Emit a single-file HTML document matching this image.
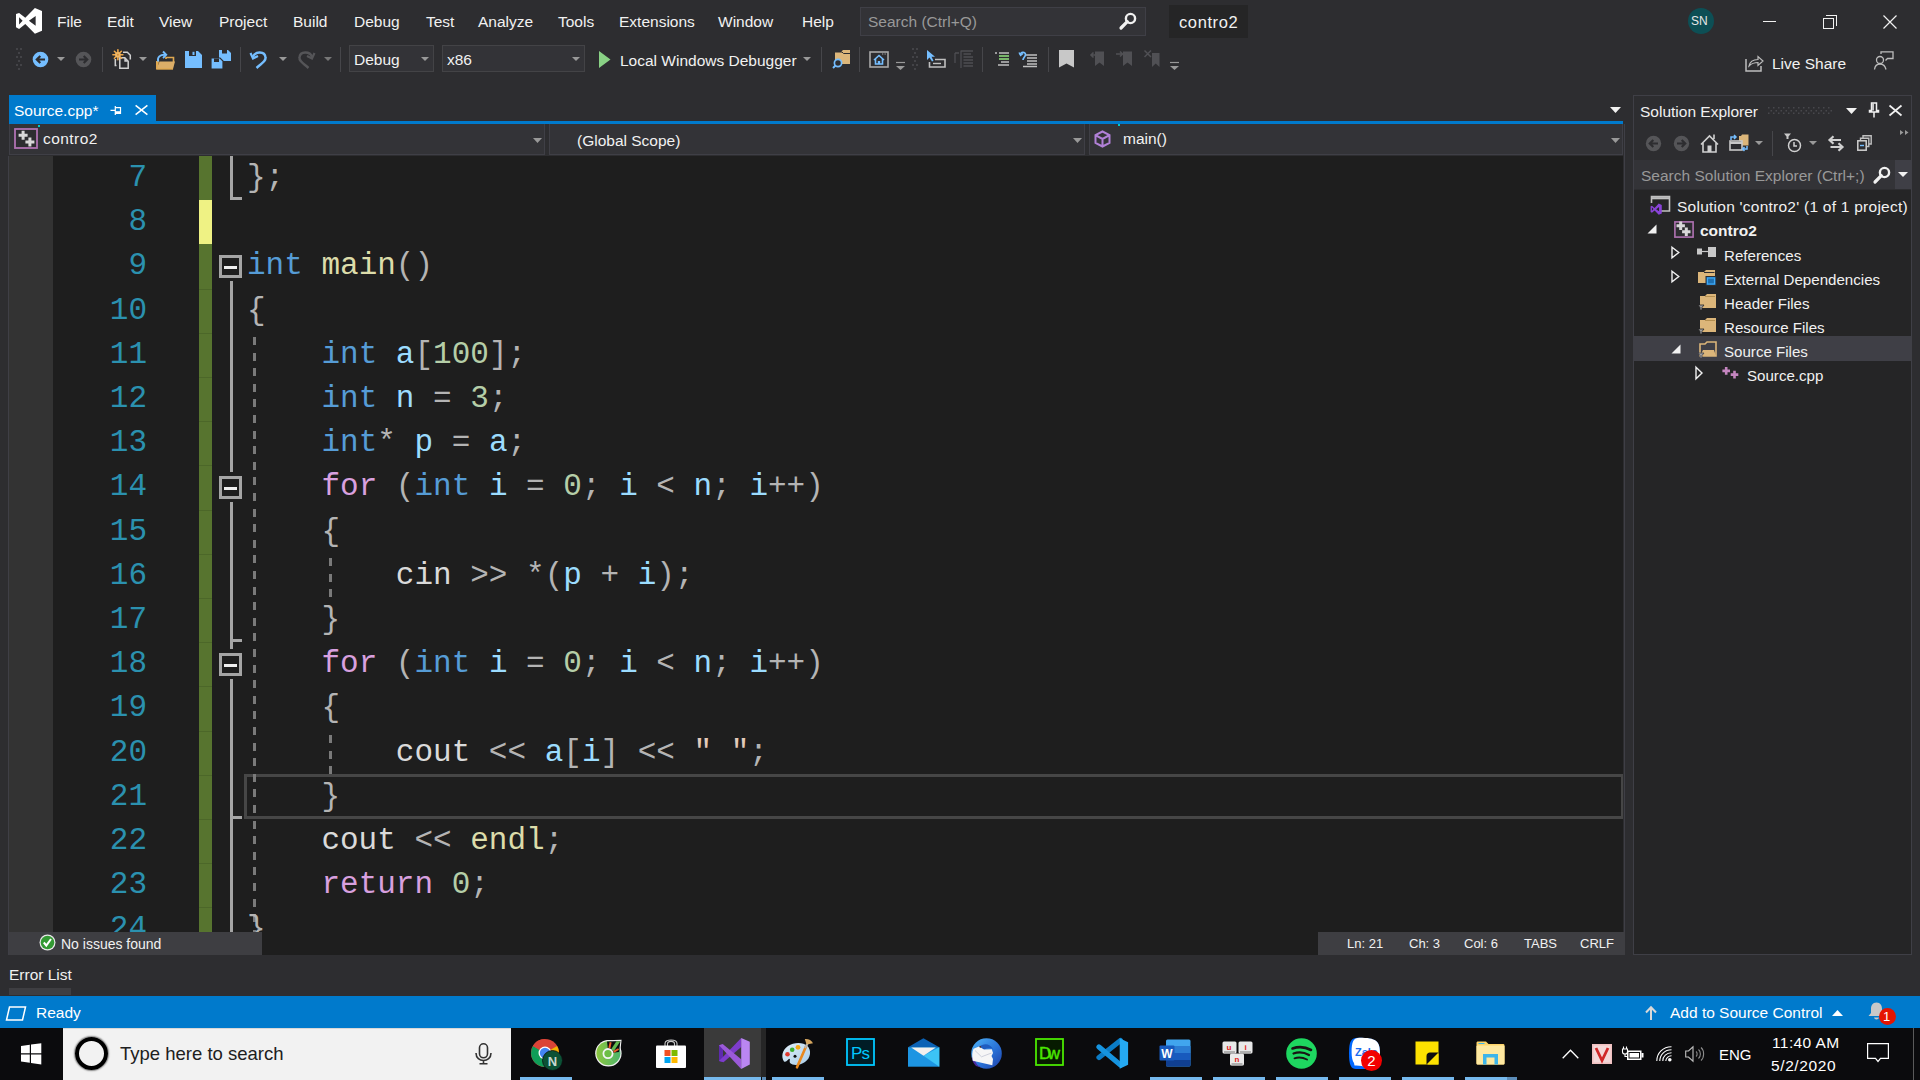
<!DOCTYPE html>
<html><head><meta charset="utf-8">
<style>
*{margin:0;padding:0;box-sizing:border-box}
html,body{width:1920px;height:1080px;overflow:hidden;background:#2D2D30}
body{position:relative;font-family:"Liberation Sans",sans-serif;color:#F1F1F1;font-size:15.5px}
.a{position:absolute}
.t{position:absolute;white-space:pre;line-height:1}
svg{position:absolute;overflow:visible}
#editor{position:absolute;left:9px;top:156px;width:1614px;height:776px;background:#1E1E1E;overflow:hidden}
#gm{position:absolute;left:0;top:0;width:44px;height:776px;background:#333333}
.ln{position:absolute;left:34px;width:104px;text-align:right;font-family:"Liberation Mono",monospace;font-size:31px;color:#2B91AF;height:44px;line-height:44px}
.cl{position:absolute;left:238px;font-family:"Liberation Mono",monospace;font-size:31px;height:44px;line-height:44px;white-space:pre;color:#DADADA}
.k{color:#569CD6}.f{color:#D8A0DF}.v{color:#9CDCFE}.n{color:#B5CEA8}.p{color:#B4B4B4}.fn{color:#DCDCAA}.s{color:#E2CABA}
.ob{position:absolute;left:210px;width:23px;height:23px;border:3px solid #A5A5A5;background:#1E1E1E}
.ob::after{content:"";position:absolute;left:2px;top:8px;width:13px;height:3px;background:#F0F0F0}
.ov{position:absolute;left:221px;width:3px;background:#A5A5A5}
.oh{position:absolute;left:221px;width:12px;height:3px;background:#A5A5A5}
.guide{position:absolute;width:3px;background:repeating-linear-gradient(to bottom,#7A7A7A 0 8px,transparent 8px 15.6px)}
.mi{position:absolute;top:14px;white-space:pre;line-height:1;font-size:15.5px;color:#F1F1F1}
</style></head>
<body>
<!-- ================= EDITOR ================= -->
<div id="editor">
  <div id="gm"></div>
  <div class="a" style="left:190px;top:0;width:13px;height:776px;background:#57742F"></div>
  <div class="a" style="left:190px;top:44.2px;width:13px;height:44.2px;background:#EFF284"></div>
  <div class="a" style="left:190px;top:132.6px;width:13px;height:1px;background:#4C6729"></div>
  <div class="a" style="left:190px;top:176.8px;width:13px;height:1px;background:#4C6729"></div>
  <div class="a" style="left:190px;top:221px;width:13px;height:1px;background:#4C6729"></div>
  <div class="a" style="left:190px;top:265.2px;width:13px;height:1px;background:#4C6729"></div>
  <div class="a" style="left:190px;top:309.4px;width:13px;height:1px;background:#4C6729"></div>
  <div class="a" style="left:190px;top:353.6px;width:13px;height:1px;background:#4C6729"></div>
  <div class="a" style="left:190px;top:397.8px;width:13px;height:1px;background:#4C6729"></div>
  <div class="a" style="left:190px;top:442px;width:13px;height:1px;background:#4C6729"></div>
  <div class="a" style="left:190px;top:486.2px;width:13px;height:1px;background:#4C6729"></div>
  <div class="a" style="left:190px;top:530.4px;width:13px;height:1px;background:#4C6729"></div>
  <div class="a" style="left:190px;top:574.6px;width:13px;height:1px;background:#4C6729"></div>
  <div class="a" style="left:190px;top:618.8px;width:13px;height:1px;background:#4C6729"></div>
  <div class="a" style="left:190px;top:663px;width:13px;height:1px;background:#4C6729"></div>
  <div class="a" style="left:190px;top:707.2px;width:13px;height:1px;background:#4C6729"></div>
  <div class="a" style="left:190px;top:751.4px;width:13px;height:1px;background:#4C6729"></div>
  <!-- current line box -->
  <div class="a" style="left:235px;top:618px;width:1380px;height:45px;border:3px solid #464646"></div>
  <!-- outlining -->
  <div class="ov" style="top:0;height:44px"></div><div class="oh" style="top:41px"></div>
  <div class="ob" style="top:99px"></div>
  <div class="ov" style="top:125px;height:191px"></div>
  <div class="ob" style="top:320px"></div>
  <div class="ov" style="top:346px;height:147px"></div><div class="oh" style="top:483px"></div>
  <div class="ob" style="top:497px"></div>
  <div class="ov" style="top:523px;height:253px"></div><div class="oh" style="top:660px"></div>
  <!-- indent guides -->
  <div class="guide" style="left:244px;top:181px;height:600px"></div>
  <div class="guide" style="left:320px;top:402px;height:44px"></div>
  <div class="guide" style="left:320px;top:579px;height:44px"></div>
<div class="ln" style="top:0.0px">7</div>
<div class="cl" style="top:0.0px"><span class="p">};</span></div>
<div class="ln" style="top:44.2px">8</div>
<div class="cl" style="top:44.2px"></div>
<div class="ln" style="top:88.4px">9</div>
<div class="cl" style="top:88.4px"><span class="k">int</span> <span class="fn">main</span><span class="p">()</span></div>
<div class="ln" style="top:132.6px">10</div>
<div class="cl" style="top:132.6px"><span class="p">{</span></div>
<div class="ln" style="top:176.8px">11</div>
<div class="cl" style="top:176.8px">    <span class="k">int</span> <span class="v">a</span><span class="p">[</span><span class="n">100</span><span class="p">];</span></div>
<div class="ln" style="top:221.0px">12</div>
<div class="cl" style="top:221.0px">    <span class="k">int</span> <span class="v">n</span> <span class="p">=</span> <span class="n">3</span><span class="p">;</span></div>
<div class="ln" style="top:265.2px">13</div>
<div class="cl" style="top:265.2px">    <span class="k">int</span><span class="p">*</span> <span class="v">p</span> <span class="p">=</span> <span class="v">a</span><span class="p">;</span></div>
<div class="ln" style="top:309.4px">14</div>
<div class="cl" style="top:309.4px">    <span class="f">for</span> <span class="p">(</span><span class="k">int</span> <span class="v">i</span> <span class="p">=</span> <span class="n">0</span><span class="p">;</span> <span class="v">i</span> <span class="p">&lt;</span> <span class="v">n</span><span class="p">;</span> <span class="v">i</span><span class="p">++)</span></div>
<div class="ln" style="top:353.6px">15</div>
<div class="cl" style="top:353.6px">    <span class="p">{</span></div>
<div class="ln" style="top:397.8px">16</div>
<div class="cl" style="top:397.8px">        cin <span class="p">&gt;&gt;</span> <span class="p">*(</span><span class="v">p</span> <span class="p">+</span> <span class="v">i</span><span class="p">);</span></div>
<div class="ln" style="top:442.0px">17</div>
<div class="cl" style="top:442.0px">    <span class="p">}</span></div>
<div class="ln" style="top:486.2px">18</div>
<div class="cl" style="top:486.2px">    <span class="f">for</span> <span class="p">(</span><span class="k">int</span> <span class="v">i</span> <span class="p">=</span> <span class="n">0</span><span class="p">;</span> <span class="v">i</span> <span class="p">&lt;</span> <span class="v">n</span><span class="p">;</span> <span class="v">i</span><span class="p">++)</span></div>
<div class="ln" style="top:530.4px">19</div>
<div class="cl" style="top:530.4px">    <span class="p">{</span></div>
<div class="ln" style="top:574.6px">20</div>
<div class="cl" style="top:574.6px">        cout <span class="p">&lt;&lt;</span> <span class="v">a</span><span class="p">[</span><span class="v">i</span><span class="p">]</span> <span class="p">&lt;&lt;</span> <span class="s">&quot; &quot;</span><span class="p">;</span></div>
<div class="ln" style="top:618.8px">21</div>
<div class="cl" style="top:618.8px">    <span class="p">}</span></div>
<div class="ln" style="top:663.0px">22</div>
<div class="cl" style="top:663.0px">    cout <span class="p">&lt;&lt;</span> <span class="fn">endl</span><span class="p">;</span></div>
<div class="ln" style="top:707.2px">23</div>
<div class="cl" style="top:707.2px">    <span class="f">return</span> <span class="n">0</span><span class="p">;</span></div>
<div class="ln" style="top:751.4px">24</div>
<div class="cl" style="top:751.4px"><span class="p">}</span></div>
</div>
<!-- ================= MENU BAR ================= -->
<svg style="left:0;top:0" width="50" height="40" viewBox="0 0 50 40"><path fill="#FFFFFF" fill-rule="evenodd" d="M34.9 7.9 L42 11.1 V30.75 L34.9 33.7 L25.3 24 L19.1 28.9 L16 27.3 V14.1 L19.1 13 L25.3 17.85 Z M19.1 17.2 L22.6 20.7 L19.1 24.5 Z M28.9 20.8 L35.65 16 V25.7 Z"/></svg>
<div class="mi" style="left:57px">File</div>
<div class="mi" style="left:107px">Edit</div>
<div class="mi" style="left:159px">View</div>
<div class="mi" style="left:219px">Project</div>
<div class="mi" style="left:293px">Build</div>
<div class="mi" style="left:354px">Debug</div>
<div class="mi" style="left:426px">Test</div>
<div class="mi" style="left:478px">Analyze</div>
<div class="mi" style="left:558px">Tools</div>
<div class="mi" style="left:619px">Extensions</div>
<div class="mi" style="left:718px">Window</div>
<div class="mi" style="left:802px">Help</div>
<!-- search -->
<div class="a" style="left:860px;top:7px;width:286px;height:29px;background:#333337;border:1px solid #3F3F46"></div>
<div class="t" style="left:868px;top:14px;color:#999999">Search (Ctrl+Q)</div>
<svg style="left:1119px;top:12px" width="18" height="18" viewBox="0 0 18 18"><circle cx="11.5" cy="6.5" r="4.6" fill="none" stroke="#F1F1F1" stroke-width="2.4"/><path d="M8.3 9.7 L2 16" stroke="#F1F1F1" stroke-width="3.2" stroke-linecap="round"/></svg>
<div class="a" style="left:1169px;top:5px;width:79px;height:33px;background:#252526"></div>
<div class="t" style="left:1179px;top:14px;color:#F1F1F1;font-size:16.5px;letter-spacing:0.6px">contro2</div>
<!-- avatar -->
<div class="a" style="left:1688px;top:8px;width:26px;height:26px;border-radius:50%;background:#0D4F55"></div>
<div class="t" style="left:1691px;top:15px;font-size:12px;color:#E8E8E8">SN</div>
<!-- window buttons -->
<div class="a" style="left:1763px;top:21px;width:13px;height:1px;background:#F1F1F1"></div>
<div class="a" style="left:1823px;top:18px;width:11px;height:11px;border:1px solid #F1F1F1"></div>
<div class="a" style="left:1826px;top:15px;width:11px;height:11px;border-top:1px solid #F1F1F1;border-right:1px solid #F1F1F1"></div>
<svg style="left:1883px;top:15px" width="14" height="14" viewBox="0 0 14 14"><path d="M0.5 0.5 L13.5 13.5 M13.5 0.5 L0.5 13.5" stroke="#F1F1F1" stroke-width="1.2"/></svg>
<!-- ================= TOOLBAR ================= -->
<svg style="left:15px;top:48px" width="8" height="23" viewBox="0 0 8 23"><g fill="#434347"><rect x="1" y="0" width="2" height="2"/><rect x="5" y="0" width="2" height="2"/><rect x="3" y="4" width="2" height="2"/><rect x="1" y="8" width="2" height="2"/><rect x="5" y="8" width="2" height="2"/><rect x="3" y="12" width="2" height="2"/><rect x="1" y="16" width="2" height="2"/><rect x="5" y="16" width="2" height="2"/><rect x="3" y="20" width="2" height="2"/></g></svg>
<!-- back / fwd -->
<svg style="left:32px;top:51px" width="17" height="17" viewBox="0 0 17 17"><circle cx="8.5" cy="8.5" r="7.8" fill="#75BEFF"/><path d="M13 8.5 H5 M8.3 5 L4.8 8.5 L8.3 12" fill="none" stroke="#2D2D30" stroke-width="2.2"/></svg>
<svg style="left:57px;top:57px" width="8" height="4" viewBox="0 0 8 4"><path d="M0 0H8L4 4Z" fill="#999999"/></svg>
<svg style="left:75px;top:51px" width="17" height="17" viewBox="0 0 17 17"><circle cx="8.5" cy="8.5" r="7.8" fill="#555558"/><path d="M4 8.5 H12 M8.7 5 L12.2 8.5 L8.7 12" fill="none" stroke="#2D2D30" stroke-width="2.2"/></svg>
<div class="a" style="left:102px;top:47px;width:1px;height:25px;background:#46464A"></div>
<!-- new project -->
<svg style="left:113px;top:49px" width="20" height="21" viewBox="0 0 20 21"><path d="M10 3.3 H14.3 L17.3 6.3 V10.5" fill="none" stroke="#D0D0D0" stroke-width="1.5"/><path d="M3.2 10.8 H2.3 V16.5 H3.5" fill="none" stroke="#D0D0D0" stroke-width="1.5"/><path d="M6.8 8.8 H11.8 L15.2 12.2 V19.3 H6.8 Z" fill="#2D2D30" stroke="#D0D0D0" stroke-width="1.5"/><path d="M11.3 8.8 V12.7 H15.2" fill="#D0D0D0"/><g stroke="#F0A848" stroke-width="1.6" stroke-linecap="round"><path d="M4.9 0.8 V10.8 M-0.1 5.8 H9.9 M1.4 2.3 L8.4 9.3 M8.4 2.3 L1.4 9.3"/></g><circle cx="4.9" cy="5.8" r="2.8" fill="#F0B868"/><circle cx="4.9" cy="5.8" r="1" fill="#D89038"/></svg>
<svg style="left:139px;top:57px" width="8" height="4" viewBox="0 0 8 4"><path d="M0 0H8L4 4Z" fill="#999999"/></svg>
<!-- open folder -->
<svg style="left:155px;top:50px" width="21" height="20" viewBox="0 0 21 20"><path d="M11 9 V7.5 H18.5 V12" fill="none" stroke="#E0A850" stroke-width="1.6"/><path d="M1 11 H4 L2.5 19 H1 Z" fill="#E0A850"/><path d="M4.5 11.5 H20 L18 19 H1.5 Z" fill="#DCAE68"/><path d="M1.2 19 H18" stroke="#E0A850" stroke-width="1.4"/><path d="M3.2 11.5 C2 7 5 4.5 10.5 4.8" fill="none" stroke="#75BEFF" stroke-width="1.9"/><path d="M8 1.5 L11.2 4.8 L8 8" fill="none" stroke="#75BEFF" stroke-width="1.9"/></svg>
<!-- save -->
<svg style="left:185px;top:51px" width="17" height="17" viewBox="0 0 17 17"><path d="M0 0 H13 L17 4 V17 H0 Z" fill="#75BEFF"/><rect x="4" y="0" width="7" height="5" fill="#2D2D30"/><rect x="7.5" y="0.8" width="2" height="3.2" fill="#75BEFF"/></svg>
<!-- save all -->
<svg style="left:211px;top:50px" width="21" height="20" viewBox="0 0 21 20"><path d="M8 0 H17 L20 3 V11 H8 Z" fill="#75BEFF"/><rect x="11" y="0" width="5" height="3.5" fill="#2D2D30"/><path d="M0 8 H9 L12 11 H12 V19 H0 Z" fill="#75BEFF" stroke="#2D2D30" stroke-width="1.2"/><rect x="3" y="8.5" width="5" height="3.5" fill="#2D2D30"/></svg>
<div class="a" style="left:240px;top:47px;width:1px;height:25px;background:#46464A"></div>
<!-- undo / redo -->
<svg style="left:250px;top:50px" width="19" height="19" viewBox="0 0 19 19"><path d="M3 7 C5 1 15 1 15.5 7.5 C16 11 12 13 6.5 18" fill="none" stroke="#75BEFF" stroke-width="2.4"/><path d="M0.5 3 L3 8.5 L8 6" fill="none" stroke="#75BEFF" stroke-width="2.2"/></svg>
<svg style="left:279px;top:57px" width="8" height="4" viewBox="0 0 8 4"><path d="M0 0H8L4 4Z" fill="#999999"/></svg>
<svg style="left:296px;top:50px" width="19" height="19" viewBox="0 0 19 19"><path d="M16 7 C14 1 4 1 3.5 7.5 C3 11 7 13 12.5 18" fill="none" stroke="#555558" stroke-width="2.4"/><path d="M18.5 3 L16 8.5 L11 6" fill="none" stroke="#555558" stroke-width="2.2"/></svg>
<svg style="left:324px;top:57px" width="8" height="4" viewBox="0 0 8 4"><path d="M0 0H8L4 4Z" fill="#777777"/></svg>
<div class="a" style="left:340px;top:47px;width:1px;height:25px;background:#46464A"></div>
<!-- Debug / x86 combos -->
<div class="a" style="left:349px;top:45px;width:85px;height:27px;background:#333337;border:1px solid #434346"></div>
<div class="t" style="left:354px;top:52px">Debug</div>
<svg style="left:421px;top:57px" width="8" height="4" viewBox="0 0 8 4"><path d="M0 0H8L4 4Z" fill="#999999"/></svg>
<div class="a" style="left:442px;top:45px;width:143px;height:27px;background:#333337;border:1px solid #434346"></div>
<div class="t" style="left:447px;top:52px">x86</div>
<svg style="left:572px;top:57px" width="8" height="4" viewBox="0 0 8 4"><path d="M0 0H8L4 4Z" fill="#999999"/></svg>
<!-- play -->
<svg style="left:599px;top:51px" width="12" height="17" viewBox="0 0 12 17"><path d="M0 0 L11.5 8.5 L0 17 Z" fill="#89D185"/></svg>
<div class="t" style="left:620px;top:53px">Local Windows Debugger</div>
<svg style="left:803px;top:57px" width="8" height="4" viewBox="0 0 8 4"><path d="M0 0H8L4 4Z" fill="#999999"/></svg>
<div class="a" style="left:821px;top:47px;width:1px;height:25px;background:#46464A"></div>
<!-- find in files folder -->
<svg style="left:832px;top:49px" width="20" height="20" viewBox="0 0 20 20"><path d="M3 3 H9 L11 1 H18 V15 H3 Z" fill="#DCB67A"/><path d="M3 3 H10 L11.5 4.5 H18" fill="none" stroke="#2D2D30" stroke-width="1"/><circle cx="6" cy="14" r="3.6" fill="#2D2D30" stroke="#75BEFF" stroke-width="1.7"/><path d="M3.5 16.5 L1 19" stroke="#75BEFF" stroke-width="2"/></svg>
<div class="a" style="left:859px;top:47px;width:1px;height:25px;background:#46464A"></div>
<!-- house frame -->
<svg style="left:869px;top:51px" width="20" height="17" viewBox="0 0 20 17"><rect x="1" y="1" width="18" height="15" fill="none" stroke="#A8A8A8" stroke-width="1.6"/><path d="M5 9 L10 4.5 L15 9 M6.5 8 V13 H13.5 V8" fill="none" stroke="#75BEFF" stroke-width="1.6"/><rect x="8.8" y="10" width="2.4" height="3" fill="#75BEFF"/><path d="M13 3h1.3M15.5 3h1.3" stroke="#A8A8A8" stroke-width="1"/></svg>
<svg style="left:896px;top:61px" width="9" height="9" viewBox="0 0 9 9"><path d="M0 1.5H9" stroke="#999" stroke-width="1.2"/><path d="M0 5H9L4.5 9Z" fill="#999"/></svg>
<svg style="left:912px;top:48px" width="6" height="23" viewBox="0 0 6 23"><g fill="#434347"><rect x="0" y="0" width="2" height="2"/><rect x="4" y="0" width="2" height="2"/><rect x="2" y="4" width="2" height="2"/><rect x="0" y="8" width="2" height="2"/><rect x="4" y="8" width="2" height="2"/><rect x="2" y="12" width="2" height="2"/><rect x="0" y="16" width="2" height="2"/><rect x="4" y="16" width="2" height="2"/><rect x="2" y="20" width="2" height="2"/></g></svg>
<!-- cursor list -->
<svg style="left:927px;top:50px" width="19" height="18" viewBox="0 0 19 18"><path d="M0 0 V10 L2.5 7.5 L5 11.5 L6.5 10.7 L4.5 6.8 H8 Z" fill="#75BEFF"/><path d="M2.5 12 V17 H18 V9.5 H8" fill="none" stroke="#C0C0C0" stroke-width="1.6"/><path d="M6 13.5 H14" stroke="#C0C0C0" stroke-width="1.4"/></svg>
<svg style="left:954px;top:50px" width="19" height="18" viewBox="0 0 19 18"><path d="M1 3 V13 M1 3 H5 M7 0.5 V18 M7 1 H19 M9.5 4 H17 M9.5 7 H19 M9.5 10 H19 M9.5 13 H19 M9.5 16 H19" fill="none" stroke="#4E4E52" stroke-width="1.3"/></svg>
<div class="a" style="left:982px;top:47px;width:1px;height:25px;background:#46464A"></div>
<svg style="left:995px;top:52px" width="14" height="14" viewBox="0 0 14 14"><path d="M0 1h2M4 1H14M4 4H14M4 7H14M6 10H14M3 13H14" stroke="#C0C0C0" stroke-width="1.3"/><path d="M4 4H14M4 7H14" stroke="#6DBF5A" stroke-width="1.6"/></svg>
<svg style="left:1019px;top:51px" width="18" height="16" viewBox="0 0 18 16"><path d="M6 4 H18M8 7 H18M8 10 H18M8 13 H18M4 15.5 H18" stroke="#C0C0C0" stroke-width="1.3"/><path d="M1.5 4 C1.5 0.5 6.5 0.5 6.5 3.5 C6.5 6 4 6.5 4 9" fill="none" stroke="#75BEFF" stroke-width="1.7"/><path d="M0 1.5 L1.6 4.5 L4 2.5" fill="none" stroke="#75BEFF" stroke-width="1.4"/></svg>
<div class="a" style="left:1048px;top:47px;width:1px;height:25px;background:#46464A"></div>
<!-- bookmarks -->
<svg style="left:1059px;top:50px" width="15" height="18" viewBox="0 0 15 18"><path d="M0 0 H15 V17.5 L7.5 13.5 L0 17.5 Z" fill="#C8C8C8"/></svg>
<svg style="left:1089px;top:50px" width="16" height="17" viewBox="0 0 16 17"><path d="M6 1.5 H15 V16 L10.5 12.5 L6 16 Z" fill="#505054"/><path d="M7 5 H2 M4.5 2.5 L2 5 L4.5 7.5" fill="none" stroke="#505054" stroke-width="1.6"/></svg>
<svg style="left:1116px;top:50px" width="16" height="17" viewBox="0 0 16 17"><path d="M7 1.5 H16 V16 L11.5 12.5 L7 16 Z" fill="#505054"/><path d="M0 4 H6 M4 1.5 L6.5 4 L4 6.5" fill="none" stroke="#505054" stroke-width="1.6"/></svg>
<svg style="left:1144px;top:50px" width="16" height="18" viewBox="0 0 16 18"><path d="M8 3 H15.5 V17 L11.7 13.5 L8 17 Z" fill="#505054"/><path d="M0.5 0.5 L7 7 M7 0.5 L0.5 7" stroke="#505054" stroke-width="1.5"/></svg>
<svg style="left:1170px;top:61px" width="9" height="9" viewBox="0 0 9 9"><path d="M0 1.5H9" stroke="#999" stroke-width="1.2"/><path d="M0 5H9L4.5 9Z" fill="#999"/></svg>
<!-- live share -->
<svg style="left:1745px;top:54px" width="19" height="18" viewBox="0 0 19 18"><path d="M1 5 V17 H16 V12" fill="none" stroke="#BDBDBD" stroke-width="1.5"/><path d="M4 12 C5 7 9 5.5 13 5.5 V2.5 L18 7 L13 11.5 V8.5 C9.5 8.5 6.5 9.5 4 12 Z" fill="none" stroke="#BDBDBD" stroke-width="1.2"/></svg>
<div class="t" style="left:1772px;top:56px">Live Share</div>
<svg style="left:1874px;top:51px" width="20" height="19" viewBox="0 0 20 19"><path d="M7 3 V0.8 H19 V7.5 H13.5 L11.5 9.5" fill="none" stroke="#BDBDBD" stroke-width="1.3"/><circle cx="6" cy="9" r="3.5" fill="none" stroke="#BDBDBD" stroke-width="1.3"/><path d="M0.5 18.5 C1 14 3 13 6 13 C9 13 11 14 12 18.5" fill="none" stroke="#BDBDBD" stroke-width="1.3"/></svg>
<!-- ================= TAB STRIP ================= -->
<div class="a" style="left:9px;top:95px;width:147px;height:29px;background:#007ACC"></div>
<div class="a" style="left:9px;top:121px;width:1614px;height:3px;background:#007ACC"></div>
<div class="t" style="left:14px;top:103px;color:#FFFFFF">Source.cpp*</div>
<svg style="left:110px;top:105px" width="12" height="11" viewBox="0 0 12 11"><path d="M0.5 5.3 H5.3 M5.3 1 V10 M5.3 2.6 H10.5 V8.3 H5.3" fill="none" stroke="#FFFFFF" stroke-width="1.2"/><path d="M5.3 7.2 H10.5" stroke="#FFFFFF" stroke-width="2"/></svg>
<svg style="left:135px;top:105px" width="13" height="10" viewBox="0 0 13 10"><path d="M0.6 0.3 L12.4 9.7 M12.4 0.3 L0.6 9.7" stroke="#FFFFFF" stroke-width="1.5"/></svg>
<svg style="left:1610px;top:107px" width="11" height="6" viewBox="0 0 11 6"><path d="M0 0 H11 L5.5 6 Z" fill="#F1F1F1"/></svg>
<!-- ================= NAV BAR ================= -->
<div class="a" style="left:9px;top:124px;width:536px;height:31px;background:#333337;border:1px solid #3F3F46;border-top:0"></div>
<div class="a" style="left:549px;top:124px;width:536px;height:31px;background:#333337;border:1px solid #3F3F46;border-top:0"></div>
<div class="a" style="left:1089px;top:124px;width:534px;height:31px;background:#333337;border:1px solid #3F3F46;border-top:0"></div>
<svg style="left:14px;top:128px" width="25" height="21" viewBox="0 0 25 21"><rect x="1" y="1" width="22" height="19" fill="#2D2D30" stroke="#B072B2" stroke-width="1.8"/><path d="M4.6 7.2 H13.6 M9.1 2.7 V11.7 M11.4 14 H20.4 M15.9 9.5 V18.5" stroke="#D8D8D8" stroke-width="3"/></svg>
<div class="t" style="left:43px;top:131px;letter-spacing:0.45px">contro2</div>
<div class="t" style="left:577px;top:133px">(Global Scope)</div>
<svg style="left:1094px;top:130px" width="17" height="18" viewBox="0 0 17 18"><path d="M8.5 1.5 L15.5 5.2 V12.8 L8.5 16.5 L1.5 12.8 V5.2 Z M1.5 5.2 L8.5 9 L15.5 5.2 M8.5 9 V16.5" fill="none" stroke="#B180D7" stroke-width="2"/></svg>
<div class="t" style="left:1123px;top:131px">main()</div>
<svg style="left:533px;top:138px" width="9" height="5" viewBox="0 0 9 5"><path d="M0 0 H9 L4.5 5 Z" fill="#999999"/></svg>
<svg style="left:1073px;top:138px" width="9" height="5" viewBox="0 0 9 5"><path d="M0 0 H9 L4.5 5 Z" fill="#999999"/></svg>
<svg style="left:1611px;top:138px" width="9" height="5" viewBox="0 0 9 5"><path d="M0 0 H9 L4.5 5 Z" fill="#999999"/></svg>
<div class="a" style="left:38px;top:125px;width:2px;height:2px;background:#00C8D0"></div>
<div class="a" style="left:1118px;top:124px;width:2px;height:2px;background:#00C8D0"></div>
<!-- ================= EDITOR BOTTOM STRIP ================= -->
<div class="a" style="left:9px;top:932px;width:1614px;height:23px;background:#1E1E1E"></div>
<div class="a" style="left:9px;top:932px;width:253px;height:23px;background:#3E3E42"></div>
<svg style="left:39px;top:934px" width="17" height="17" viewBox="0 0 17 17"><circle cx="8.5" cy="8.5" r="8" fill="#E8E8E8"/><circle cx="8.5" cy="8.5" r="6.8" fill="#339933"/><path d="M4.8 8.5 L7.3 11.5 L12 5" fill="none" stroke="#FFFFFF" stroke-width="2"/></svg>
<div class="t" style="left:61px;top:937px;font-size:14px">No issues found</div>
<div class="a" style="left:1318px;top:932px;width:307px;height:23px;background:#3E3E42"></div>
<div class="a" style="left:1624px;top:124px;width:1px;height:808px;background:#3F3F46"></div>
<div class="a" style="left:8px;top:156px;width:1px;height:799px;background:#3F3F46"></div>
<div class="t" style="left:1347px;top:937px;font-size:13px">Ln: 21</div>
<div class="t" style="left:1409px;top:937px;font-size:13px">Ch: 3</div>
<div class="t" style="left:1464px;top:937px;font-size:13px">Col: 6</div>
<div class="t" style="left:1524px;top:937px;font-size:13px">TABS</div>
<div class="t" style="left:1580px;top:937px;font-size:13px">CRLF</div>
<div class="t" style="left:9px;top:967px">Error List</div>
<div class="a" style="left:9px;top:988px;width:62px;height:7px;background:#3E3E42"></div>
<!-- ================= STATUS BAR ================= -->
<div class="a" style="left:0;top:996px;width:1920px;height:32px;background:#007ACC"></div>
<svg style="left:5px;top:1006px" width="22" height="15" viewBox="0 0 22 15"><path d="M4.5 1 H20.5 L17.5 14 H1.5 Z" fill="none" stroke="#FFFFFF" stroke-width="1.5"/></svg>
<div class="t" style="left:36px;top:1005px;color:#FFFFFF">Ready</div>
<svg style="left:1645px;top:1006px" width="12" height="14" viewBox="0 0 12 14"><path d="M6 14 V2 M1 6.5 L6 1.2 L11 6.5" fill="none" stroke="#D8D8D8" stroke-width="2"/></svg>
<div class="t" style="left:1670px;top:1005px;color:#FFFFFF">Add to Source Control</div>
<svg style="left:1832px;top:1010px" width="11" height="6" viewBox="0 0 11 6"><path d="M0 6 H11 L5.5 0 Z" fill="#FFFFFF"/></svg>
<svg style="left:1868px;top:1002px" width="17" height="19" viewBox="0 0 17 19"><path d="M8.5 0.5 C12.5 0.5 14 3.5 14 7 V11 L16.5 14 H0.5 L3 11 V7 C3 3.5 4.5 0.5 8.5 0.5 Z M6 15.5 C6.5 18 10.5 18 11 15.5" fill="#C8C8C8"/></svg>
<div class="a" style="left:1879px;top:1008px;width:17px;height:17px;border-radius:50%;background:#E51400"></div>
<div class="t" style="left:1883px;top:1010px;font-size:13px;color:#FFFFFF">1</div>
<!-- ================= SOLUTION EXPLORER ================= -->
<div class="a" style="left:1633px;top:95px;width:279px;height:860px;border:1px solid #3F3F46;background:#252526"></div>
<div class="a" style="left:1634px;top:96px;width:277px;height:94px;background:#2D2D30"></div>
<div class="t" style="left:1640px;top:104px">Solution Explorer</div>
<svg style="left:1768px;top:107px" width="68" height="7" viewBox="0 0 68 7"><g fill="#48484C">
<rect x="0" y="0" width="1.5" height="1.5"/><rect x="5" y="0" width="1.5" height="1.5"/><rect x="10" y="0" width="1.5" height="1.5"/><rect x="15" y="0" width="1.5" height="1.5"/><rect x="20" y="0" width="1.5" height="1.5"/><rect x="25" y="0" width="1.5" height="1.5"/><rect x="30" y="0" width="1.5" height="1.5"/><rect x="35" y="0" width="1.5" height="1.5"/><rect x="40" y="0" width="1.5" height="1.5"/><rect x="45" y="0" width="1.5" height="1.5"/><rect x="50" y="0" width="1.5" height="1.5"/><rect x="55" y="0" width="1.5" height="1.5"/><rect x="60" y="0" width="1.5" height="1.5"/>
<rect x="2.5" y="3" width="1.5" height="1.5"/><rect x="7.5" y="3" width="1.5" height="1.5"/><rect x="12.5" y="3" width="1.5" height="1.5"/><rect x="17.5" y="3" width="1.5" height="1.5"/><rect x="22.5" y="3" width="1.5" height="1.5"/><rect x="27.5" y="3" width="1.5" height="1.5"/><rect x="32.5" y="3" width="1.5" height="1.5"/><rect x="37.5" y="3" width="1.5" height="1.5"/><rect x="42.5" y="3" width="1.5" height="1.5"/><rect x="47.5" y="3" width="1.5" height="1.5"/><rect x="52.5" y="3" width="1.5" height="1.5"/><rect x="57.5" y="3" width="1.5" height="1.5"/><rect x="62.5" y="3" width="1.5" height="1.5"/>
<rect x="0" y="5.5" width="1.5" height="1.5"/><rect x="5" y="5.5" width="1.5" height="1.5"/><rect x="10" y="5.5" width="1.5" height="1.5"/><rect x="15" y="5.5" width="1.5" height="1.5"/><rect x="20" y="5.5" width="1.5" height="1.5"/><rect x="25" y="5.5" width="1.5" height="1.5"/><rect x="30" y="5.5" width="1.5" height="1.5"/><rect x="35" y="5.5" width="1.5" height="1.5"/><rect x="40" y="5.5" width="1.5" height="1.5"/><rect x="45" y="5.5" width="1.5" height="1.5"/><rect x="50" y="5.5" width="1.5" height="1.5"/><rect x="55" y="5.5" width="1.5" height="1.5"/><rect x="60" y="5.5" width="1.5" height="1.5"/>
</g></svg>
<svg style="left:1846px;top:108px" width="11" height="6" viewBox="0 0 11 6"><path d="M0 0 H11 L5.5 6 Z" fill="#F1F1F1"/></svg>
<svg style="left:1869px;top:102px" width="10" height="16" viewBox="0 0 10 16"><path d="M2.5 1 H7.5 V8.5 H9.5 V10 H0.5 V8.5 H2.5 Z M5 10 V15.5" fill="none" stroke="#F1F1F1" stroke-width="1.5"/><rect x="3.3" y="1.5" width="1.5" height="7" fill="#F1F1F1"/></svg>
<svg style="left:1889px;top:105px" width="13" height="11" viewBox="0 0 13 11"><path d="M0.5 0.5 L12.5 10.5 M12.5 0.5 L0.5 10.5" stroke="#F1F1F1" stroke-width="1.7"/></svg>
<!-- SE toolbar -->
<svg style="left:1645px;top:135px" width="17" height="17" viewBox="0 0 17 17"><circle cx="8.5" cy="8.5" r="7.7" fill="#555558"/><path d="M13 8.5 H5 M8.3 5 L4.8 8.5 L8.3 12" fill="none" stroke="#2D2D30" stroke-width="2.2"/></svg>
<svg style="left:1673px;top:135px" width="17" height="17" viewBox="0 0 17 17"><circle cx="8.5" cy="8.5" r="7.7" fill="#555558"/><path d="M4 8.5 H12 M8.7 5 L12.2 8.5 L8.7 12" fill="none" stroke="#2D2D30" stroke-width="2.2"/></svg>
<svg style="left:1700px;top:134px" width="19" height="19" viewBox="0 0 19 19"><path d="M1 10.5 L9.5 2 L18 10.5 M3 8.5 V18 H16 V8.5 M14 5 V0.5" fill="none" stroke="#D0D0D0" stroke-width="1.6"/><rect x="7.5" y="11.5" width="4" height="6.5" fill="#D0D0D0"/></svg>
<svg style="left:1729px;top:134px" width="20" height="18" viewBox="0 0 20 18"><path d="M10 2 H12 L13 0.5 H19.5 V11.5 H10 Z" fill="#DCB67A"/><rect x="1" y="7" width="12" height="9" fill="#2D2D30" stroke="#C8C8C8" stroke-width="1.6"/><path d="M1 9 H13" stroke="#C8C8C8" stroke-width="2"/><path d="M2 6 V3 H6 M5 1 L7 3 L5 5" fill="none" stroke="#75BEFF" stroke-width="1.5"/><path d="M18 12 V15 H14 M15.5 13 L13.5 15 L15.5 17" fill="none" stroke="#75BEFF" stroke-width="1.5"/></svg>
<svg style="left:1755px;top:141px" width="8" height="4" viewBox="0 0 8 4"><path d="M0 0H8L4 4Z" fill="#999999"/></svg>
<div class="a" style="left:1772px;top:131px;width:1px;height:25px;background:#46464A"></div>
<svg style="left:1784px;top:133px" width="18" height="20" viewBox="0 0 18 20"><path d="M0 0.5 H7 L4.5 3.5 V6 H2.5 V3.5 Z" fill="#C8C8C8"/><circle cx="10.5" cy="12.5" r="6" fill="none" stroke="#D0D0D0" stroke-width="1.5"/><path d="M10 9 V13 H13" fill="none" stroke="#D0D0D0" stroke-width="1.5"/></svg>
<svg style="left:1809px;top:141px" width="8" height="4" viewBox="0 0 8 4"><path d="M0 0H8L4 4Z" fill="#999999"/></svg>
<svg style="left:1828px;top:135px" width="16" height="17" viewBox="0 0 16 17"><path d="M13 5 H2 M5.5 1.2 L1.5 5 L5.5 8.8 M2.5 12 H14 M10.5 8.2 L14.5 12 L10.5 15.8" fill="none" stroke="#D0D0D0" stroke-width="2.2"/></svg>
<svg style="left:1857px;top:135px" width="15" height="16" viewBox="0 0 15 16"><path d="M6 3 V0.8 H14.2 V9 H12 M3.5 5.5 V3.2 H11.8 V11.5 H9.5" fill="none" stroke="#C0C0C0" stroke-width="1.4"/><rect x="0.8" y="5.8" width="8.4" height="9.4" fill="#2D2D30" stroke="#D0D0D0" stroke-width="1.5"/><path d="M3 10.5 H7" stroke="#75BEFF" stroke-width="1.4"/></svg>
<svg style="left:1900px;top:130px" width="9" height="5" viewBox="0 0 9 5"><path d="M0 0 L3.5 2.5 L0 5 Z M5 0 L8.5 2.5 L5 5 Z" fill="#999999"/></svg>
<!-- search -->
<div class="a" style="left:1634px;top:160px;width:261px;height:29px;background:#333337"></div>
<div class="a" style="left:1895px;top:160px;width:16px;height:29px;background:#3F3F46"></div>
<div class="t" style="left:1641px;top:168px;color:#999999">Search Solution Explorer (Ctrl+;)</div>
<svg style="left:1873px;top:166px" width="18" height="18" viewBox="0 0 18 18"><circle cx="11.5" cy="6.5" r="4.6" fill="none" stroke="#F1F1F1" stroke-width="2.4"/><path d="M8.3 9.7 L2 16" stroke="#F1F1F1" stroke-width="3.2" stroke-linecap="round"/></svg>
<svg style="left:1898px;top:172px" width="10" height="5" viewBox="0 0 10 5"><path d="M0 0H10L5 5Z" fill="#F1F1F1"/></svg>
<!-- tree -->
<div class="a" style="left:1634px;top:336px;width:277px;height:25px;background:#3F3F46"></div>
<svg style="left:1650px;top:195px" width="21" height="20" viewBox="0 0 21 20"><path d="M11 16 H19.5 V1.5 H1.5 V8" fill="none" stroke="#C0C0C0" stroke-width="1.6"/><path d="M1.5 3.2 H19.5" stroke="#C0C0C0" stroke-width="2.2"/><g transform="translate(-6.28 5.2) scale(0.43)"><path fill="#8A44D8" fill-rule="evenodd" d="M34.9 7.9 L42 11.1 V30.75 L34.9 33.7 L25.3 24 L19.1 28.9 L16 27.3 V14.1 L19.1 13 L25.3 17.85 Z M19.1 17.2 L22.6 20.7 L19.1 24.5 Z M28.9 20.8 L35.65 16 V25.7 Z"/></g></svg>
<div class="t" style="left:1677px;top:199px;letter-spacing:0.25px">Solution 'contro2' (1 of 1 project)</div>
<svg style="left:1647px;top:224px" width="10" height="10" viewBox="0 0 10 10"><path d="M9.5 0.5 V9.5 H0.5 Z" fill="#F1F1F1"/></svg>
<svg style="left:1674px;top:221px" width="20" height="17" viewBox="0 0 20 17"><rect x="0.9" y="0.9" width="18.2" height="15.2" fill="#2D2D30" stroke="#B072B2" stroke-width="1.6"/><path d="M2.5 4.8 H10.9 M6.7 0.6 V9 M8.1 10.8 H16.5 M12.3 6.6 V15" stroke="#D8D8D8" stroke-width="3"/></svg>
<div class="t" style="left:1700px;top:223px;font-weight:bold">contro2</div>
<svg style="left:1671px;top:246px" width="9" height="13" viewBox="0 0 9 13"><path d="M1 1.2 L7.8 6.5 L1 11.8 Z" fill="none" stroke="#F1F1F1" stroke-width="1.4"/></svg>
<svg style="left:1697px;top:247px" width="20" height="11" viewBox="0 0 20 11"><rect x="0" y="1.5" width="5" height="6" fill="#C8C8C8"/><rect x="11" y="0" width="8" height="10" fill="#C8C8C8"/><path d="M5 4.5 H11" stroke="#C8C8C8" stroke-width="1.2"/></svg>
<div class="t" style="left:1724px;top:247.5px;font-size:15.1px">References</div>
<svg style="left:1671px;top:270px" width="9" height="13" viewBox="0 0 9 13"><path d="M1 1.2 L7.8 6.5 L1 11.8 Z" fill="none" stroke="#F1F1F1" stroke-width="1.4"/></svg>
<svg style="left:1698px;top:269px" width="20" height="17" viewBox="0 0 20 17"><path d="M0 3 H6 L8 1 H17 V14 H0 Z" fill="#DCB67A"/><path d="M6 3.5 H16.5" stroke="#2D2D30" stroke-width="1"/><rect x="8" y="7.5" width="10" height="9" fill="#1E6FB0" stroke="#2D2D30" stroke-width="1"/><rect x="9.5" y="9" width="7" height="6" fill="none" stroke="#3FA9F5" stroke-width="1.2"/></svg>
<div class="t" style="left:1724px;top:271.5px;font-size:15.1px">External Dependencies</div>
<svg style="left:1698px;top:293px" width="20" height="18" viewBox="0 0 20 18"><path d="M2 3 H7 L9 1 H18 V15 H2 Z" fill="#DCB67A"/><path d="M7 3.5 H17" stroke="#B48F50" stroke-width="1"/><path d="M0 12 H6 L4 14.5 V17 H2 V14.5 Z" fill="#A0A0A0" stroke="#252526" stroke-width="0.8"/></svg>
<div class="t" style="left:1724px;top:295.5px;font-size:15.1px">Header Files</div>
<svg style="left:1698px;top:317px" width="20" height="18" viewBox="0 0 20 18"><path d="M2 3 H7 L9 1 H18 V15 H2 Z" fill="#DCB67A"/><path d="M7 3.5 H17" stroke="#B48F50" stroke-width="1"/><path d="M0 12 H6 L4 14.5 V17 H2 V14.5 Z" fill="#A0A0A0" stroke="#252526" stroke-width="0.8"/></svg>
<div class="t" style="left:1724px;top:319.5px;font-size:15.1px">Resource Files</div>
<svg style="left:1671px;top:344px" width="10" height="10" viewBox="0 0 10 10"><path d="M9.5 0.5 V9.5 H0.5 Z" fill="#F1F1F1"/></svg>
<svg style="left:1698px;top:341px" width="20" height="18" viewBox="0 0 20 18"><path d="M2 3 H7 L9 1 H18 V15 H2 Z" fill="none" stroke="#DCB67A" stroke-width="1.6"/><path d="M2 15 L5 9 H16 L18 15 Z" fill="#DCB67A"/><path d="M4 7 H15 V12" fill="none" stroke="#1E1E1E" stroke-width="0"/><path d="M0 12 H6 L4 14.5 V17 H2 V14.5 Z" fill="#A0A0A0" stroke="#3F3F46" stroke-width="0.8"/></svg>
<div class="t" style="left:1724px;top:343.5px;font-size:15.1px">Source Files</div>
<svg style="left:1695px;top:366px" width="8" height="14" viewBox="0 0 8 14"><path d="M1 1.2 L7 7 L1 12.8 Z" fill="none" stroke="#F1F1F1" stroke-width="1.4"/></svg>
<svg style="left:1722px;top:367px" width="17" height="12" viewBox="0 0 17 12"><path d="M0.4 3.9 H8 M4.2 0.1 V7.7 M8.7 7.6 H16.3 M12.5 3.8 V11.4" stroke="#C586C0" stroke-width="2.6"/></svg>
<div class="t" style="left:1747px;top:367.5px;font-size:15.1px">Source.cpp</div>
<!-- ================= TASKBAR ================= -->
<div class="a" style="left:0;top:1028px;width:1920px;height:52px;background:#0B0B0D"></div>
<svg style="left:21px;top:1043px" width="21" height="22" viewBox="0 0 21 22"><path d="M0 3 L8.8 1.8 V10.2 H0 Z M10 1.6 L20.3 0.2 V10.2 H10 Z M0 11.4 H8.8 V19.8 L0 18.6 Z M10 11.4 H20.3 V21.4 L10 20 Z" fill="#FFFFFF"/></svg>
<div class="a" style="left:63px;top:1028px;width:448px;height:52px;background:#F2F2F2;border-top:1px solid #D8D8D8"></div>
<div class="a" style="left:75px;top:1037px;width:33px;height:33px;border-radius:50%;border:4.5px solid #000000;box-shadow:0 0 1.5px 1px rgba(0,0,0,0.45)"></div>
<div class="t" style="left:120px;top:1045px;font-size:18.5px;color:#202020">Type here to search</div>
<svg style="left:475px;top:1043px" width="17" height="22" viewBox="0 0 17 22"><rect x="4.5" y="0.8" width="8" height="14" rx="4" fill="none" stroke="#333333" stroke-width="1.6"/><path d="M1 10 C1 20 16 20 16 10 M8.5 17.5 V20.5 M4.5 20.8 H12.5" fill="none" stroke="#333333" stroke-width="1.6"/></svg>
<!-- running underlines -->
<div class="a" style="left:520px;top:1077px;width:52px;height:3px;background:#76B9ED"></div>
<div class="a" style="left:704px;top:1028px;width:57px;height:49px;background:#3A3A3A"></div>
<div class="a" style="left:761px;top:1028px;width:5px;height:49px;background:#262626"></div>
<div class="a" style="left:704px;top:1077px;width:57px;height:3px;background:#76B9ED"></div>
<div class="a" style="left:762px;top:1077px;width:4px;height:3px;background:#5C8DB8"></div>
<div class="a" style="left:772px;top:1077px;width:52px;height:3px;background:#76B9ED"></div>
<div class="a" style="left:1150px;top:1077px;width:52px;height:3px;background:#76B9ED"></div>
<div class="a" style="left:1213px;top:1077px;width:52px;height:3px;background:#76B9ED"></div>
<div class="a" style="left:1276px;top:1077px;width:52px;height:3px;background:#76B9ED"></div>
<div class="a" style="left:1339px;top:1077px;width:52px;height:3px;background:#76B9ED"></div>
<div class="a" style="left:1402px;top:1077px;width:52px;height:3px;background:#76B9ED"></div>
<div class="a" style="left:1465px;top:1077px;width:42px;height:3px;background:#76B9ED"></div>
<div class="a" style="left:1507px;top:1077px;width:10px;height:3px;background:#5C8DB8"></div>
<!-- chrome -->
<svg style="left:531px;top:1039px" width="33" height="33" viewBox="0 0 33 33">
<circle cx="14" cy="14" r="14" fill="#DB4437"/>
<path d="M14 14 L1.9 7 A14 14 0 0 0 14 28 Z" fill="#0F9D58"/>
<path d="M14 14 L26.1 7 A14 14 0 0 1 14 28 Z" fill="#F4B400"/>
<path d="M14 14 L14 0 A14 14 0 0 0 1.9 7 Z" fill="#DB4437"/>
<circle cx="14" cy="14" r="6.5" fill="#FFFFFF"/><circle cx="14" cy="14" r="5.2" fill="#4285F4"/>
<circle cx="21.5" cy="21.5" r="10" fill="#0B5135" stroke="#0D0D0F" stroke-width="0.8"/>
<text x="21.5" y="26.5" text-anchor="middle" font-family="Liberation Sans" font-weight="bold" font-size="13" fill="#C8D8D0">N</text>
</svg>
<!-- coc coc -->
<svg style="left:594px;top:1039px" width="30" height="28" viewBox="0 0 30 28">
<defs><linearGradient id="ccg" x1="0" y1="0" x2="1" y2="0"><stop offset="0" stop-color="#8DC63F"/><stop offset="1" stop-color="#4CB56B"/></linearGradient></defs>
<circle cx="14.4" cy="14.3" r="13.2" fill="#F0F0F0"/>
<path d="M14.4 14.3 L12.4 1.2 L27.6 0.8 L26.2 13.4 Z" fill="#F0F0F0"/>
<circle cx="14.4" cy="14.3" r="12" fill="url(#ccg)"/>
<path d="M14.4 14.3 L13 2.6 L26.4 1.9 L25 13 Z" fill="#0D0D0F"/>
<path d="M15.4 9 L16.6 3.2" stroke="#F05A28" stroke-width="2"/>
<path d="M17 10.6 L22.4 2.2 L26.4 2.2 L19.9 12 Z" fill="#62B94E"/>
<path d="M19.6 12.9 L24.6 10" stroke="#F05A28" stroke-width="2"/>
<circle cx="14" cy="14.6" r="4.6" fill="#6DBE45" stroke="#F4F4F4" stroke-width="1.8"/>
</svg>
<!-- store -->
<svg style="left:655px;top:1038px" width="32" height="31" viewBox="0 0 32 31">
<path d="M10 8 V5.5 C10 0.8 22 0.8 22 5.5 V8 M12.5 8 V6 C12.5 2.5 19.5 2.5 19.5 6 V8" fill="none" stroke="#C8C8C8" stroke-width="1.1"/>
<rect x="1" y="7.5" width="30" height="22.5" rx="1" fill="#FFFFFF"/>
<rect x="9.5" y="12" width="6" height="6" fill="#F25022"/><rect x="16.5" y="12" width="6" height="6" fill="#7FBA00"/>
<rect x="9.5" y="19" width="6" height="6" fill="#00A4EF"/><rect x="16.5" y="19" width="6" height="6" fill="#FFB900"/>
</svg>
<!-- visual studio -->
<svg style="left:700px;top:1030px" width="70" height="50" viewBox="700 1030 70 50">
<path d="M719 1045.3 L723 1044.5 V1062 L719 1061 Z" fill="#5E2AAE"/>
<path d="M719 1061 L741.2 1038.1 V1047.1 L723.5 1062.3 Z" fill="#7D3CCB"/>
<path d="M719 1045.3 L722.7 1044.1 L741.2 1059.2 V1068.9 Z" fill="#9B5AD8"/>
<path d="M741.2 1038.1 L749.8 1041.8 V1064.5 L741.2 1068.9 Z" fill="#BA86F2"/>
</svg>
<!-- paint -->
<svg style="left:776px;top:1034px" width="44" height="38" viewBox="776 1034 44 38">
<defs><linearGradient id="plg" x1="0" y1="0" x2="1" y2="1"><stop offset="0" stop-color="#E2F0FA"/><stop offset="1" stop-color="#A8CDE8"/></linearGradient></defs>
<path d="M784 1061.5 C781 1057 782 1050 788 1046 C794 1042 803 1042 807.5 1046 C811.5 1050 811 1058 805 1062 C800 1065.5 793 1066 790 1063 C789 1061 790.5 1059 789.5 1058.8 C788 1059 786.5 1063 784 1061.5 Z" fill="url(#plg)"/>
<circle cx="787.5" cy="1054.3" r="2.3" fill="#E03A30"/>
<circle cx="792.2" cy="1049.8" r="2.3" fill="#3CB030"/>
<circle cx="798" cy="1047.3" r="2.4" fill="#F5A818"/>
<circle cx="795" cy="1056.2" r="1.5" fill="#0D0D0F"/>
<path d="M797 1067.3 L806 1046.5" stroke="#E8881E" stroke-width="2.6" stroke-linecap="round"/>
<path d="M805 1048 L807.5 1043.8" stroke="#B8B8B8" stroke-width="2.2"/>
<path d="M806.5 1044.5 L804.8 1039 C808 1038.5 811.5 1040 813 1043.2 Z" fill="#D8A860"/>
</svg>
<!-- photoshop -->
<svg style="left:846px;top:1038px" width="29" height="28" viewBox="0 0 29 28">
<rect x="1" y="1" width="27" height="26" fill="#001D26" stroke="#00C8FF" stroke-width="1.8"/>
<text x="14.5" y="21" text-anchor="middle" font-family="Liberation Sans" font-size="17" textLength="19" fill="#00C8FF">Ps</text>
</svg>
<!-- mail -->
<svg style="left:900px;top:1032px" width="50" height="40" viewBox="900 1032 50 40">
<path d="M908 1047.2 L923.4 1038.3 L939.3 1047.2 Z" fill="#0A62B5"/>
<path d="M908 1047.2 H939.3 V1066.7 H908 Z" fill="#1D95E2"/>
<path d="M923.5 1055.8 L939.3 1047.2 V1066.7 Z" fill="#3CC4F6"/>
<path d="M911.2 1047.6 H935.8 L923.5 1055.8 Z" fill="#F2F0EE"/>
</svg>
<!-- thunderbird -->
<svg style="left:960px;top:1032px" width="50" height="42" viewBox="960 1032 50 42">
<defs><linearGradient id="tbg" x1="0" y1="0" x2="1" y2="1"><stop offset="0" stop-color="#4FB4F8"/><stop offset="0.55" stop-color="#2A74D8"/><stop offset="1" stop-color="#1E3FA8"/></linearGradient></defs>
<circle cx="986.5" cy="1053.5" r="15.3" fill="url(#tbg)"/>
<path d="M975 1058 C975 1064 979 1067 983 1068 L976 1066 C973 1063 972 1060 972 1057 Z" fill="#4A2CA0"/>
<path d="M979 1047 C983 1043 990 1043 993 1049 C990 1047 986 1048 984 1050 Z" fill="#1F5CC0"/>
<path d="M973.5 1048.8 L979 1046.5 L984 1049.5 L991.8 1049.2 L993 1053 L991.5 1056 L993 1059 L992.3 1065.2 L972.8 1060.7 C971.8 1056 972 1052 973.5 1048.8 Z" fill="#F6F6F6"/>
<path d="M975 1050.5 L981.5 1056.8 L991.5 1053" fill="none" stroke="#C8CCD8" stroke-width="0.9"/>
<circle cx="980.3" cy="1046.8" r="0.9" fill="#5A3020"/>
</svg>
<!-- dreamweaver -->
<svg style="left:1035px;top:1038px" width="29" height="28" viewBox="0 0 29 28">
<rect x="1" y="1" width="27" height="26" fill="#071B00" stroke="#4BE800" stroke-width="1.8"/>
<text x="14.5" y="21" text-anchor="middle" font-family="Liberation Sans" font-size="17" textLength="21" fill="#4BE800" stroke="#4BE800" stroke-width="0.4">Dw</text>
</svg>
<!-- vscode -->
<svg style="left:1090px;top:1032px" width="42" height="42" viewBox="1090 1032 42 42">
<path d="M1099 1057.5 L1120.5 1040.5" stroke="#0B7CC6" stroke-width="5.2" stroke-linecap="round"/>
<path d="M1099 1047 L1120.5 1065" stroke="#1694DF" stroke-width="5.2" stroke-linecap="round"/>
<path d="M1119.7 1038.2 L1128.1 1042.2 V1064.8 L1119.7 1068.8 Z" fill="#25AAF3"/>
</svg>
<!-- word -->
<svg style="left:1159px;top:1039px" width="32" height="28" viewBox="0 0 32 28">
<rect x="7" y="0.5" width="24.5" height="27" rx="1.5" fill="#41A5EE"/>
<rect x="7" y="7" width="24.5" height="7" fill="#2B7CD3"/>
<rect x="7" y="14" width="24.5" height="7" fill="#185ABD"/>
<path d="M7 21 H31.5 V26 C31.5 27 30.5 27.5 30 27.5 H8.5 C7.5 27.5 7 27 7 26 Z" fill="#103F91"/>
<rect x="0.5" y="6.5" width="15" height="15" rx="1" fill="#185ABD"/>
<text x="8" y="18.5" text-anchor="middle" font-family="Liberation Sans" font-weight="bold" font-size="12" fill="#FFFFFF">W</text>
</svg>
<!-- unikey -->
<svg style="left:1222px;top:1041px" width="32" height="26" viewBox="0 0 32 26">
<rect x="0.5" y="0.5" width="14" height="12" rx="1.5" fill="#E8E8E8"/><rect x="16.5" y="0.5" width="14" height="12" rx="1.5" fill="#E8E8E8"/><rect x="8" y="12.5" width="14" height="12" rx="1.5" fill="#EAEAEA"/>
<rect x="2" y="10" width="11" height="2.5" fill="#B0B0B0"/><rect x="18" y="10" width="11" height="2.5" fill="#B0B0B0"/><rect x="9.5" y="22" width="11" height="2.5" fill="#B0B0B0"/>
<text x="7" y="8.5" text-anchor="middle" font-family="Liberation Sans" font-weight="bold" font-size="8" fill="#E02020">u</text>
<text x="23.5" y="8.5" text-anchor="middle" font-family="Liberation Sans" font-weight="bold" font-size="8" fill="#E02020">i</text>
<text x="15" y="20.5" text-anchor="middle" font-family="Liberation Sans" font-weight="bold" font-size="8" fill="#E02020">n</text>
</svg>
<!-- spotify -->
<svg style="left:1286px;top:1038px" width="31" height="31" viewBox="0 0 31 31">
<circle cx="15.5" cy="15.5" r="15.3" fill="#1ED760"/>
<path d="M6.5 10.5 C12 8.5 19.5 9 25 12" fill="none" stroke="#191414" stroke-width="2.6" stroke-linecap="round"/>
<path d="M7.5 15.5 C12 14 18.5 14.5 23 17" fill="none" stroke="#191414" stroke-width="2.2" stroke-linecap="round"/>
<path d="M8.5 20.3 C12 19.2 17 19.5 21 21.5" fill="none" stroke="#191414" stroke-width="1.9" stroke-linecap="round"/>
</svg>
<!-- zalo -->
<svg style="left:1340px;top:1032px" width="60" height="42" viewBox="1340 1032 60 42">
<path d="M1358 1037.8 C1376 1037.8 1380 1041 1380 1053.5 C1380 1066 1376 1069 1364 1069 L1356 1069 C1351 1069 1349 1065 1349 1053.5 C1349 1041 1351 1037.8 1358 1037.8 Z" fill="#0068FF"/>
<path d="M1359.5 1037.8 C1376 1037.8 1380 1041 1380 1053 C1380 1064 1376 1066.5 1366 1066.5 C1363 1066.5 1359 1065 1354.5 1065.5 L1354 1063 C1352.5 1061 1351.6 1057 1351.6 1052.5 C1351.6 1041.5 1353.5 1037.8 1359.5 1037.8 Z" fill="#FFFFFF"/>
<text x="1355" y="1055.7" font-family="Liberation Sans" font-weight="bold" font-size="11" fill="#1A6CF0">Zalo</text>
<circle cx="1371.5" cy="1060.6" r="10.5" fill="#F20000"/>
<text x="1371.5" y="1066" text-anchor="middle" font-family="Liberation Sans" font-size="15" fill="#FFFFFF">2</text>
</svg>
<!-- sticky notes -->
<svg style="left:1415px;top:1041px" width="24" height="24" viewBox="0 0 24 24">
<rect x="0.5" y="0.5" width="23" height="23" fill="#FCE100"/>
<path d="M11.5 23.5 V15 C11.5 13 13 11.5 15 11.5 H23.5 Z" fill="#0D0D0F"/>
<path d="M12.5 23.5 L23.5 12.5 V23.5 Z" fill="#FCE100"/>
</svg>
<!-- explorer -->
<svg style="left:1476px;top:1041px" width="29" height="24" viewBox="0 0 29 24">
<path d="M0.5 2 C0.5 1 1 0.5 2 0.5 H10 L12.5 3 H27 C28 3 28.5 3.5 28.5 4.5 V22 C28.5 23 28 23.5 27 23.5 H2 C1 23.5 0.5 23 0.5 22 Z" fill="#FFD56A"/>
<rect x="0.5" y="4.5" width="28" height="19" rx="1" fill="#FFE9A0"/>
<path d="M2.5 2.5 H8.5" stroke="#3DB5EA" stroke-width="1"/>
<path d="M7 23.5 V13 H22 V23.5 H18.5 V16.5 H10.5 V23.5 Z" fill="#3DB5EA"/>
</svg>
<!-- tray -->
<svg style="left:1562px;top:1049px" width="17" height="10" viewBox="0 0 17 10"><path d="M0.7 9.3 L8.5 1.2 L16.3 9.3" fill="none" stroke="#FFFFFF" stroke-width="1.3"/></svg>
<svg style="left:1592px;top:1044px" width="20" height="20" viewBox="0 0 20 20"><rect x="0" y="0" width="20" height="20" fill="#F0C0C0"/><rect x="1.5" y="1.5" width="17" height="17" fill="#F4D8D8"/><path d="M4 4 L10 16.5 L16 4" fill="none" stroke="#D02828" stroke-width="2.8"/></svg>
<svg style="left:1622px;top:1046px" width="22" height="15" viewBox="0 0 22 15"><path d="M1.5 0.5 V3 M4.5 0.5 V3 M0.5 3 H5.5 V6 C5.5 7.5 4 8 3 8 C2 8 0.5 7.5 0.5 6 Z M3 8 V10.5 H5" fill="none" stroke="#FFFFFF" stroke-width="1.1"/><rect x="5" y="4.5" width="14.5" height="9.5" fill="#FFFFFF"/><rect x="6.5" y="6" width="11.5" height="6.5" fill="#0D0D0F"/><rect x="7.5" y="7" width="9.5" height="4.5" fill="#FFFFFF"/><rect x="19.5" y="7" width="2" height="4.5" fill="#FFFFFF"/></svg>
<svg style="left:1656px;top:1046px" width="17" height="16" viewBox="0 0 17 16"><path d="M0.8 15 C0.8 7 7 0.8 15.5 0.8 M3.8 15 C3.8 8.7 8.7 3.8 15.5 3.8 M6.8 15 C6.8 10.5 10.5 6.8 15.5 6.8 M9.8 15 C9.8 12.2 12.5 9.8 15.5 9.8" fill="none" stroke="#FFFFFF" stroke-width="1.1"/><circle cx="13.8" cy="13.8" r="1.8" fill="#FFFFFF"/></svg>
<svg style="left:1685px;top:1046px" width="20" height="16" viewBox="0 0 20 16"><path d="M0.7 5 H3.5 L8 0.8 V15.2 L3.5 11 H0.7 Z" fill="none" stroke="#C0C0C0" stroke-width="1.1"/><path d="M11 5.5 C12.5 6.5 12.5 9.5 11 10.5 M13.5 3.5 C16 5.5 16 10.5 13.5 12.5 M16 1.5 C19.5 4.5 19.5 11.5 16 14.5" fill="none" stroke="#8C8C8C" stroke-width="1.1"/></svg>
<svg style="left:1867px;top:1043px" width="22" height="21" viewBox="0 0 22 21"><path d="M0.6 0.6 H21.4 V15.4 H13.5 L11 18.5 L8.5 15.4 H0.6 Z" fill="none" stroke="#FFFFFF" stroke-width="1.2"/></svg>
<div class="a" style="left:1913px;top:1028px;width:1px;height:52px;background:#5A5A5A"></div>
<div class="t" style="left:1719px;top:1047px;font-size:15px;color:#FFFFFF">ENG</div>
<div class="t" style="left:1772px;top:1035px;font-size:15.5px;letter-spacing:0.4px;color:#FFFFFF">11:40 AM</div>
<div class="t" style="left:1771px;top:1058px;font-size:15.5px;letter-spacing:0.6px;color:#FFFFFF">5/2/2020</div>
</body></html>
